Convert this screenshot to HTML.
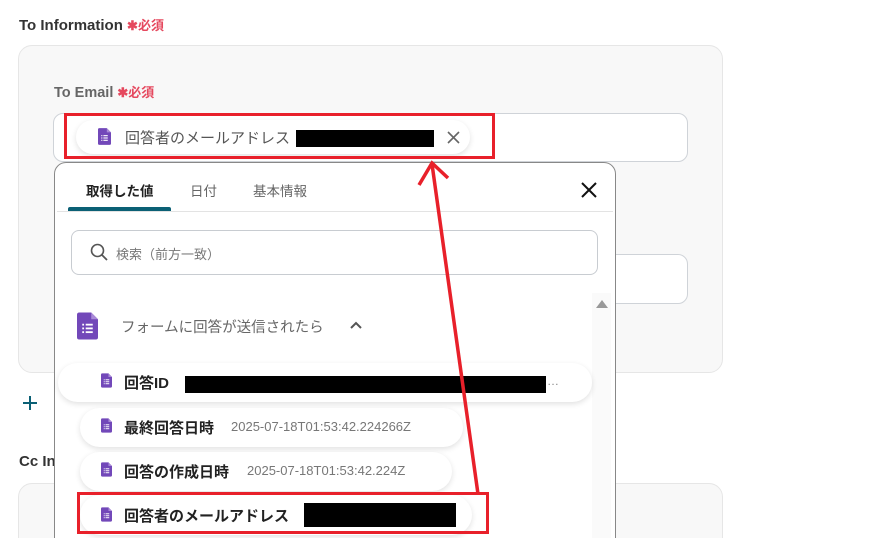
<!DOCTYPE html>
<html style="height:538px;overflow:hidden"><head><meta charset="utf-8"><style>
*{box-sizing:border-box;margin:0;padding:0}
body{width:896px;height:538px;overflow:hidden;background:#fff;font-family:"Liberation Sans","Noto Sans CJK JP",sans-serif;position:relative}
.abs{position:absolute}
.req{color:#e5485e;font-size:13px}
.card{position:absolute;left:18px;width:705px;background:#f8f8f8;border:1px solid #e6e6e6;border-radius:14px}
.inp{position:absolute;background:#fff;border:1px solid #cfd3d8;border-radius:10px}
.chip{position:absolute;background:#fff;border-radius:20px;box-shadow:0 2px 6px rgba(0,0,0,.12)}
.red{position:absolute;border:3px solid #e8202a}
.blk{position:absolute;background:#000}
.t{position:absolute;white-space:nowrap}
</style></head><body>
<svg width="0" height="0" style="position:absolute"><defs>
<symbol id="f" viewBox="0 0 14 18"><path d="M1.5 0H9.5L14 4.5V16.5Q14 18 12.5 18H1.5Q0 18 0 16.5V1.5Q0 0 1.5 0Z" fill="#7248b9"/><path d="M9.5 0V4.5H14Z" fill="#a98ad8"/><g fill="#fff"><rect x="3.5" y="7.5" width="1.2" height="1.2"/><rect x="5.8" y="7.5" width="4.7" height="1.2"/><rect x="3.5" y="10" width="1.2" height="1.2"/><rect x="5.8" y="10" width="4.7" height="1.2"/><rect x="3.5" y="12.5" width="1.2" height="1.2"/><rect x="5.8" y="12.5" width="4.7" height="1.2"/></g></symbol>
</defs></svg>

<div class="t" style="left:19px;top:15px;font-size:15px;color:#333;font-weight:bold">To Information <span class="req">✱必須</span></div>
<div class="card" style="top:45px;height:328px"></div>
<div class="t" style="left:54px;top:82px;font-size:14.5px;color:#666;font-weight:bold">To Email <span class="req">✱必須</span></div>
<div class="inp" style="left:53px;top:113px;width:635px;height:49px"></div>
<div class="inp" style="left:560px;top:254px;width:128px;height:50px"></div>
<div class="chip" style="left:76px;top:120px;width:394px;height:34px"></div>
<svg class="abs" style="left:98px;top:128px" width="13" height="17"><use href="#f"/></svg>
<div class="t" style="left:125px;top:127px;font-size:15px;color:#555">回答者のメールアドレス</div>
<div class="blk" style="left:296px;top:130px;width:138px;height:17px"></div>
<svg class="abs" style="left:447px;top:131px" width="13" height="13"><path d="M1 1L12 12M12 1L1 12" stroke="#666" stroke-width="1.6"/></svg>
<div class="red" style="left:64px;top:113px;width:431px;height:46px"></div>

<svg class="abs" style="left:22px;top:395px" width="16" height="16"><path d="M8 1V15M1 8H15" stroke="#0b6075" stroke-width="2"/></svg>
<div class="t" style="left:19px;top:453px;font-size:15px;color:#333;font-weight:bold">Cc Information</div>
<div class="card" style="top:483px;height:80px"></div>

<div class="abs" style="left:54px;top:162px;width:562px;height:400px;background:#fff;border:1px solid #888;border-radius:12px"></div>
<div class="t" style="left:86px;top:180px;font-size:13.5px;color:#222;font-weight:bold">取得した値</div>
<div class="t" style="left:190px;top:180px;font-size:13.5px;color:#666">日付</div>
<div class="t" style="left:253px;top:180px;font-size:13.5px;color:#666">基本情報</div>
<div class="abs" style="left:57px;top:211px;width:556px;height:1px;background:#e3e3e3"></div>
<div class="abs" style="left:68px;top:207px;width:103px;height:4px;background:#0b6075;border-radius:2px 2px 0 0"></div>
<svg class="abs" style="left:580px;top:181px" width="18" height="18"><path d="M2 2L16 16M16 2L2 16" stroke="#111" stroke-width="2"/></svg>
<div class="abs" style="left:71px;top:230px;width:527px;height:45px;border:1px solid #c8ccd1;border-radius:8px"></div>
<svg class="abs" style="left:90px;top:243px" width="18" height="18"><circle cx="7.5" cy="7.5" r="6" stroke="#555" stroke-width="1.6" fill="none"/><path d="M12 12L17 17" stroke="#555" stroke-width="1.8"/></svg>
<div class="t" style="left:116px;top:244px;font-size:13px;color:#777">検索（前方一致）</div>
<div class="abs" style="left:592px;top:293px;width:19px;height:245px;background:#fafafa"></div>
<svg class="abs" style="left:595px;top:299px" width="14" height="10"><path d="M7 1L13 9H1Z" fill="#999"/></svg>

<svg class="abs" style="left:77px;top:312px" width="21" height="28"><use href="#f"/></svg>
<div class="t" style="left:121px;top:316px;font-size:14.5px;color:#666">フォームに回答が送信されたら</div>
<svg class="abs" style="left:349px;top:320px" width="14" height="10"><path d="M2 8L7 3L12 8" stroke="#555" stroke-width="2" fill="none"/></svg>

<div class="chip" style="left:58px;top:363px;width:534px;height:39px"></div>
<div class="chip" style="left:80px;top:408px;width:383px;height:39px"></div>
<div class="chip" style="left:80px;top:452px;width:372px;height:39px"></div>
<div class="chip" style="left:80px;top:495px;width:392px;height:40px"></div>
<svg class="abs" style="left:101px;top:373px" width="11" height="15"><use href="#f"/></svg>
<svg class="abs" style="left:101px;top:418px" width="11" height="15"><use href="#f"/></svg>
<svg class="abs" style="left:101px;top:462px" width="11" height="15"><use href="#f"/></svg>
<svg class="abs" style="left:101px;top:507px" width="11" height="15"><use href="#f"/></svg>
<div class="t" style="left:124px;top:372px;font-size:15px;color:#222;font-weight:bold">回答ID</div>
<div class="blk" style="left:185px;top:376px;width:361px;height:17px"></div>
<div class="t" style="left:547px;top:374px;font-size:12px;color:#888">…</div>
<div class="t" style="left:124px;top:417px;font-size:15px;color:#222;font-weight:bold">最終回答日時</div>
<div class="t" style="left:231px;top:419px;font-size:13px;color:#777">2025-07-18T01:53:42.224266Z</div>
<div class="t" style="left:124px;top:461px;font-size:15px;color:#222;font-weight:bold">回答の作成日時</div>
<div class="t" style="left:247px;top:463px;font-size:13px;color:#777">2025-07-18T01:53:42.224Z</div>
<div class="t" style="left:124px;top:505px;font-size:15px;color:#222;font-weight:bold">回答者のメールアドレス</div>
<div class="blk" style="left:304px;top:503px;width:152px;height:24px"></div>
<div class="red" style="left:77px;top:492px;width:412px;height:42px"></div>

<svg class="abs" style="left:0;top:0" width="896" height="538"><path d="M478 494L432 164" stroke="#e8202a" stroke-width="3.5" fill="none"/><path d="M419 185L432 163L448 178" stroke="#e8202a" stroke-width="3.5" fill="none"/></svg>
</body></html>
